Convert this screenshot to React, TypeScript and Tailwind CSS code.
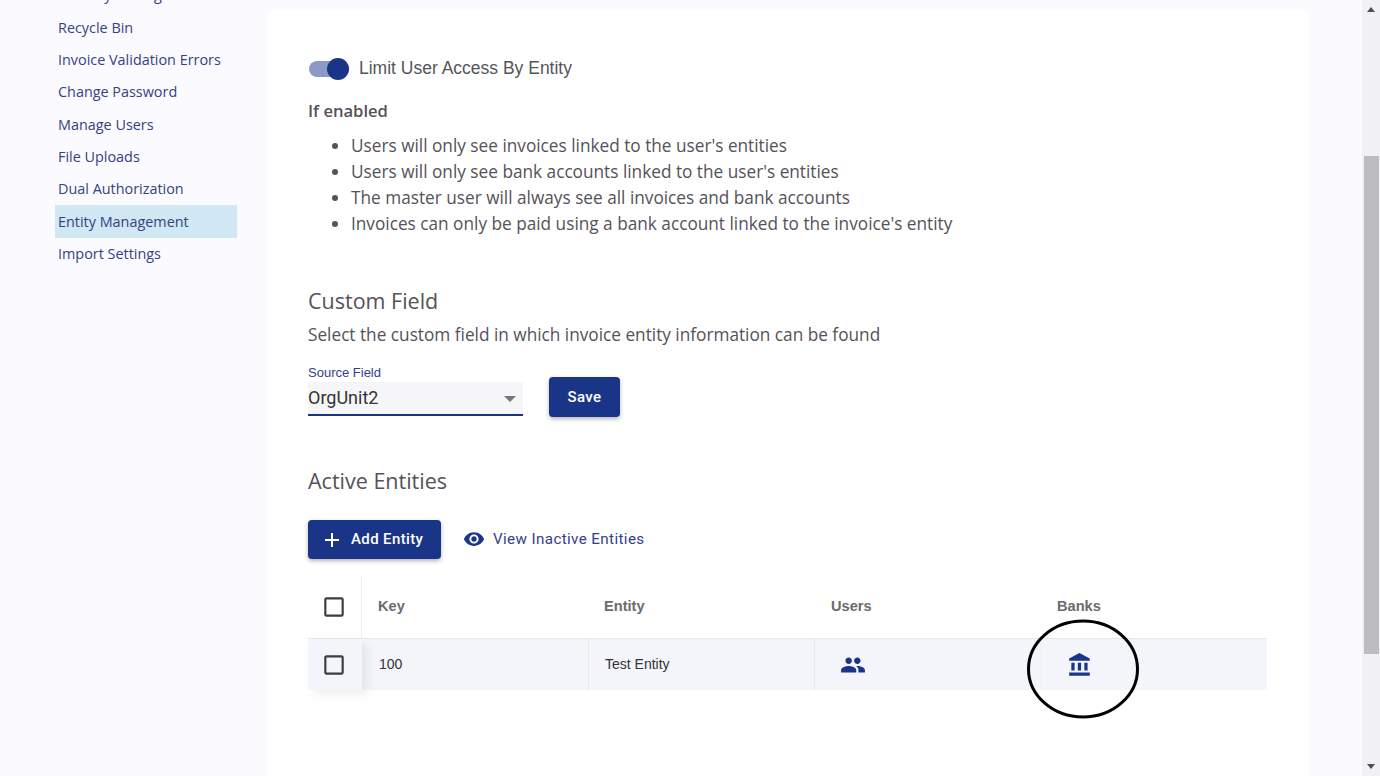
const navItems = [
  "Security Settings",
  "Recycle Bin",
  "Invoice Validation Errors",
  "Change Password",
  "Manage Users",
  "File Uploads",
  "Dual Authorization",
  "Entity Management",
  "Import Settings",
];

const bullets = [
  "Users will only see invoices linked to the user's entities",
  "Users will only see bank accounts linked to the user's entities",
  "The master user will always see all invoices and bank accounts",
  "Invoices can only be paid using a bank account linked to the invoice's entity",
];

function Icon({ d, className }: { d: string; className: string }) {
  return (
    <svg viewBox="0 0 24 24" fill="currentColor" className={className}>
      <path d={d} />
    </svg>
  );
}

const checkboxPath =
  "M19 5v14H5V5h14m0-2H5c-1.1 0-2 .9-2 2v14c0 1.1.9 2 2 2h14c1.1 0 2-.9 2-2V5c0-1.1-.9-2-2-2z";
const groupPath =
  "M16 11c1.66 0 2.99-1.34 2.99-3S17.66 5 16 5c-1.66 0-3 1.34-3 3s1.34 3 3 3zm-8 0c1.66 0 2.99-1.34 2.99-3S9.66 5 8 5C6.34 5 5 6.34 5 8s1.34 3 3 3zm0 2c-2.33 0-7 1.17-7 3.5V19h14v-2.5c0-2.33-4.67-3.5-7-3.5zm8 0c-.29 0-.62.02-.97.05 1.16.84 1.97 1.97 1.97 3.45V19h6v-2.5c0-2.33-4.67-3.5-7-3.5z";
const bankPath =
  "M4 10v7h3v-7H4zm6 0v7h3v-7h-3zM2 22h19v-3H2v3zm14-12v7h3v-7h-3zm-4.5-9L2 6v2h19V6l-9.5-5z";
const eyePath =
  "M12 4.5C7 4.5 2.73 7.61 1 12c1.73 4.39 6 7.5 11 7.5s9.27-3.11 11-7.5c-1.73-4.39-6-7.5-11-7.5zM12 17c-2.76 0-5-2.24-5-5s2.24-5 5-5 5 2.24 5 5-2.24 5-5 5zm0-8c-1.66 0-3 1.34-3 3s1.34 3 3 3 3-1.34 3-3-1.34-3-3-3z";
const plusPath = "M19 13h-6v6h-2v-6H5v-2h6V5h2v6h6v2z";

function Sidebar() {
  return (
    <aside className="w-[268px] shrink-0 overflow-hidden bg-[#fbfaff] font-['Open_Sans',sans-serif] text-[14.4px] text-[#34427f]">
      <ul className="mt-[-21px] ml-[55px] w-[182px]">
        {navItems.map((item) => (
          <li
            key={item}
            className={
              "flex h-[32.33px] items-center pl-[3px] " +
              (item === "Entity Management" ? "bg-[#cfe8f3]" : "")
            }
          >
            {item}
          </li>
        ))}
      </ul>
    </aside>
  );
}

function EntityTable() {
  return (
    <div className="mt-[17px] w-[959px] font-['Liberation_Sans',Arial,sans-serif] text-[14px]">
      <div className="grid h-[62px] grid-cols-[54px_226px_226px_226px_227px] items-center text-[14.6px] font-bold text-[#6b6b6b]">
        <div className="flex h-full items-center justify-center border-r border-[#f0f0f3] pr-[2px]">
          <Icon d={checkboxPath} className="h-[26px] w-[26px] text-[#3d3d3d]" />
        </div>
        <div className="pl-[16px]">Key</div>
        <div className="pl-[16px]">Entity</div>
        <div className="pl-[17px]">Users</div>
        <div className="pl-[17px]">Banks</div>
      </div>
      <div className="grid h-[52px] grid-cols-[54px_226px_226px_226px_227px] items-center border-t border-[#e6e6ec] bg-[#f4f5fb] text-[#333333]">
        <div className="relative z-10 flex h-full items-center justify-center pr-[2px] shadow-[5px_4px_9px_rgba(0,0,0,0.07)]">
          <Icon d={checkboxPath} className="h-[26px] w-[26px] text-[#3d3d3d]" />
        </div>
        <div className="pl-[17px]">100</div>
        <div className="flex h-full items-center border-l border-[#e8e8ee] pl-[16px]">Test Entity</div>
        <div className="flex h-full items-center border-l border-[#e8e8ee] pl-[25px]">
          <Icon d={groupPath} className="h-[26px] w-[26px] text-[#1a3587]" />
        </div>
        <div className="flex h-full items-center border-l border-[#f0f0f6] pl-[26px]">
          <Icon d={bankPath} className="h-[26px] w-[26px] text-[#1a3587]" />
        </div>
      </div>
    </div>
  );
}

function Scrollbar() {
  return (
    <div className="flex w-[18px] shrink-0 flex-col items-center bg-[#f1f0f2]">
      <div className="flex h-[156px] w-full justify-center pt-[7px]">
        <div className="h-0 w-0 border-x-[4px] border-b-[5px] border-x-transparent border-b-[#505050]" />
      </div>
      <div className="h-[498px] w-[15px] bg-[#bdbcbe]" />
      <div className="flex flex-1 items-end pb-[7px]">
        <div className="h-0 w-0 border-x-[4px] border-t-[5px] border-x-transparent border-t-[#505050]" />
      </div>
    </div>
  );
}

export default function App() {
  return (
    <div className="relative flex h-[776px] w-[1380px] overflow-hidden bg-[#fbfaff]">
      <Sidebar />
      <main className="mt-[10px] w-[1040px] shrink-0 rounded-t bg-white pl-[40px] font-['Open_Sans',sans-serif] text-[#55525a]">
        <div className="mt-[47px] flex h-6 items-center">
          <span className="relative ml-[1px] h-[16px] w-[40px] rounded-full bg-[#8c9ac3]">
            <span className="absolute top-[-3px] right-0 h-[22px] w-[22px] rounded-full bg-[#1a3587]" />
          </span>
          <span className="ml-[10px] pb-[2px] font-['Liberation_Sans',Arial,sans-serif] text-[17.5px] text-[#55555a]">
            Limit User Access By Entity
          </span>
        </div>
        <h3 className="mt-[18px] text-[16.6px] leading-[24px] font-semibold">If enabled</h3>
        <ul className="mt-[10px] list-disc pl-[43px] text-[17.23px] leading-[26px]">
          {bullets.map((b) => (
            <li key={b}>{b}</li>
          ))}
        </ul>
        <h2 className="mt-[49px] text-[21.5px] leading-[30px]">Custom Field</h2>
        <p className="mt-[6px] text-[17.23px] leading-[26px]">
          Select the custom field in which invoice entity information can be found
        </p>
        <div className="mt-[17px] flex items-end">
          <div className="w-[215px] font-['Roboto',sans-serif]">
            <div className="font-['Liberation_Sans',Arial,sans-serif] text-[13px] leading-[16px] text-[#33418a]">
              Source Field
            </div>
            <div className="relative mt-[1px] flex h-[34px] items-center border-b-2 border-[#1a3587] bg-[#f6f5f7] pb-[1px] text-[18px] text-[#333333]">
              OrgUnit2
              <span className="absolute top-[14px] right-[7px] h-0 w-0 border-x-[6px] border-t-[6px] border-x-transparent border-t-[#77767a]" />
            </div>
          </div>
          <button className="mb-[-1px] ml-[26px] h-[40px] w-[71px] rounded bg-[#1a3587] font-['Roboto',sans-serif] text-[15px] font-medium tracking-wide text-white shadow-[0_2px_4px_rgba(0,0,0,0.3)]">
            Save
          </button>
        </div>
        <h2 className="mt-[50px] text-[21.5px] leading-[30px]">Active Entities</h2>
        <div className="mt-[24px] flex items-center font-['Roboto',sans-serif] text-[15px] font-medium tracking-wide">
          <button className="flex h-[39px] w-[133px] items-center rounded bg-[#1a3587] pl-[12px] text-white shadow-[0_2px_4px_rgba(0,0,0,0.3)]">
            <Icon d={plusPath} className="h-6 w-6" />
            <span className="ml-[7px]">Add Entity</span>
          </button>
          <div className="ml-[22px] flex items-center text-[#33418a]">
            <Icon d={eyePath} className="h-[22px] w-[22px] text-[#1a3587]" />
            <span className="ml-[8px] text-[15.2px] font-normal">View Inactive Entities</span>
          </div>
        </div>
        <EntityTable />
      </main>
      <div className="flex-1" />
      <Scrollbar />
      {/* hand-drawn annotation circle */}
      <svg
        viewBox="0 0 1380 776"
        className="pointer-events-none absolute inset-0 h-[776px] w-[1380px]"
        fill="none"
      >
        <ellipse cx="1083" cy="669" rx="54.5" ry="48" stroke="#000000" strokeWidth="3" />
      </svg>
    </div>
  );
}
